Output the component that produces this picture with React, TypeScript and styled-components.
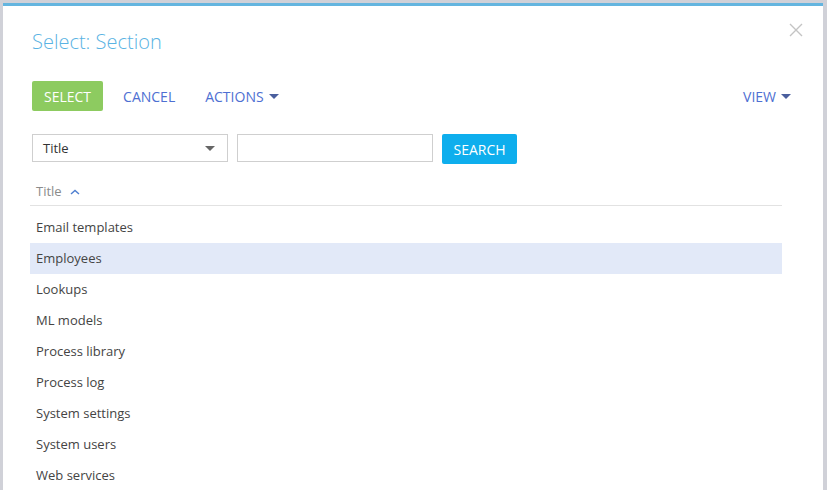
import styled, { createGlobalStyle } from "styled-components";

const GlobalStyle = createGlobalStyle`
  html, body {
    margin: 0;
    padding: 0;
    background: #d0d1d8;
    font-family: "Open Sans", "Liberation Sans", sans-serif;
    overflow: hidden;
  }
`;

const Backdrop = styled.div`
  height: 490px;
  padding: 3px 4px 0 3px;
  box-sizing: border-box;
`;

const Modal = styled.div`
  position: relative;
  height: 487px;
  background: #fff;
  border-top: 3px solid #64b5df;
  box-sizing: border-box;
  padding: 22px 22px 0 27px;
  overflow: hidden;
`;

const Title = styled.h1`
  margin: 0 0 0 2px;
  font-size: 20px;
  line-height: 28px;
  font-weight: 300;
  color: #5ab3e3;
`;

const Close = styled.button`
  position: absolute;
  top: 14px;
  right: 17px;
  width: 20px;
  height: 20px;
  padding: 0;
  border: 0;
  background: none;
  display: flex;
  align-items: center;
  justify-content: center;
  cursor: pointer;
`;

const Toolbar = styled.div`
  display: flex;
  align-items: center;
  gap: 10px;
  margin: 25px 0 0 2px;
  height: 30px;
`;

const PrimaryButton = styled.button<{ $color: string }>`
  height: 30px;
  padding: 0 12px;
  border: 0;
  border-radius: 2px;
  background: ${(p) => p.$color};
  color: #fff;
  font-family: inherit;
  font-size: 14px;
  text-transform: uppercase;
`;

const LinkButton = styled.button<{ $right?: boolean }>`
  height: 30px;
  padding: 0 10px;
  border: 0;
  background: none;
  color: #4e6fd2;
  font-family: inherit;
  font-size: 14px;
  text-transform: uppercase;
  display: flex;
  align-items: center;
  gap: 5px;
  margin-left: ${(p) => (p.$right ? "auto" : "0")};
`;

const Caret = styled.span<{ $color?: string }>`
  display: inline-block;
  width: 0;
  height: 0;
  border-left: 5px solid transparent;
  border-right: 5px solid transparent;
  border-top: 5px solid ${(p) => p.$color || "#4a5f9e"};
`;

const FilterRow = styled.div`
  display: flex;
  align-items: flex-start;
  margin: 23px 0 0 2px;
`;

const SelectBox = styled.div`
  width: 196px;
  height: 28px;
  box-sizing: border-box;
  border: 1px solid #cfcfcf;
  display: flex;
  align-items: center;
  justify-content: space-between;
  padding: 0 12px 0 10px;
  font-size: 13px;
  color: #333;
`;

const TextInput = styled.input`
  width: 196px;
  height: 28px;
  box-sizing: border-box;
  border: 1px solid #cfcfcf;
  margin-left: 9px;
  outline: none;
`;

const SearchButton = styled(PrimaryButton)`
  margin-left: 9px;
  width: 75px;
  padding: 0;
`;

const HeaderRow = styled.div`
  margin: 18px 19px 0 0;
  height: 23px;
  border-bottom: 1px solid #e2e2e2;
  display: flex;
  align-items: flex-start;
  gap: 8px;
  padding-left: 6px;
  line-height: 18px;
  font-size: 13px;
  color: #8b8b8b;

  svg {
    margin-top: 7px;
  }
`;

const List = styled.ul`
  list-style: none;
  margin: 0 19px 0 0;
  padding: 6px 0 0;
`;

const Row = styled.li<{ $selected?: boolean }>`
  height: 31px;
  box-sizing: border-box;
  display: flex;
  align-items: center;
  padding: 0 0 1px 6px;
  font-size: 13px;
  color: #444;
  background: ${(p) => (p.$selected ? "#e2e9f8" : "transparent")};
`;

const sections = [
  "Email templates",
  "Employees",
  "Lookups",
  "ML models",
  "Process library",
  "Process log",
  "System settings",
  "System users",
  "Web services",
];

export default function App() {
  return (
    <>
      <GlobalStyle />
      <Backdrop>
        <Modal>
          <Title>Select: Section</Title>
          <Close>
            <svg width="14" height="14" viewBox="0 0 14 14">
              <path d="M1 1L13 13M13 1L1 13" stroke="#c4c4c4" strokeWidth="1.4" />
            </svg>
          </Close>
          <Toolbar>
            <PrimaryButton $color="#8dcb60">Select</PrimaryButton>
            <LinkButton>Cancel</LinkButton>
            <LinkButton>
              Actions <Caret />
            </LinkButton>
            <LinkButton $right>
              View <Caret />
            </LinkButton>
          </Toolbar>
          <FilterRow>
            <SelectBox>
              Title <Caret $color="#666" />
            </SelectBox>
            <TextInput />
            <SearchButton $color="#0eaeed">Search</SearchButton>
          </FilterRow>
          <HeaderRow>
            Title
            <svg width="10" height="6" viewBox="0 0 10 6">
              <path d="M1 5L5 1.5L9 5" stroke="#4e7fd0" strokeWidth="1.4" fill="none" />
            </svg>
          </HeaderRow>
          <List>
            {sections.map((s) => (
              <Row key={s} $selected={s === "Employees"}>
                {s}
              </Row>
            ))}
          </List>
        </Modal>
      </Backdrop>
    </>
  );
}
